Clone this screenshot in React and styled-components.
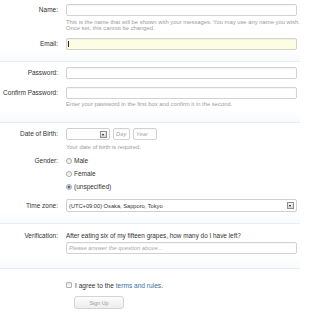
import React from 'react';
import styled, { createGlobalStyle } from 'styled-components';

const GlobalStyle = createGlobalStyle`
  body {
    margin: 0;
    background: #fff;
    font-family: 'Liberation Sans', Arial, sans-serif;
  }
`;

function App() {
  return (
    <>
      <GlobalStyle />
      <StForm>
        <StFieldset $top={4} $bottom={11}>
          <StRow>
            <StLabel>Name:</StLabel>
            <StControl>
              <StInput />
              <StHint $top={4} $lh={5.5}>
                This is the name that will be shown with your messages. You may use any name you wish.
                <br />
                Once set, this cannot be changed.
              </StHint>
            </StControl>
          </StRow>
          <StRow $top={7}>
            <StLabel>Email:</StLabel>
            <StControl>
              <StCaretWrap>
                <StInput $focus />
                <StCaret />
              </StCaretWrap>
            </StControl>
          </StRow>
        </StFieldset>

        <StFieldset $top={5} $bottom={15}>
          <StRow>
            <StLabel>Password:</StLabel>
            <StControl>
              <StInput type="password" />
            </StControl>
          </StRow>
          <StRow $top={8}>
            <StLabel>Confirm Password:</StLabel>
            <StControl>
              <StInput type="password" />
              <StHint $top={2} $lh={6}>
                Enter your password in the first box and confirm it in the second.
              </StHint>
            </StControl>
          </StRow>
        </StFieldset>

        <StFieldset $top={5} $bottom={11}>
          <StRow>
            <StLabel>Date of Birth:</StLabel>
            <StControl>
              <StDateLine>
                <StSelect $width={44}>
                  <span />
                  <StArrow />
                </StSelect>
                <StSmallInput $width={17} placeholder="Day" />
                <StSmallInput $width={24} placeholder="Year" />
              </StDateLine>
              <StHint $top={4} $lh={6}>Your date of birth is required.</StHint>
            </StControl>
          </StRow>
          <StRow $top={4}>
            <StLabel $lh={13}>Gender:</StLabel>
            <StControl>
              {['Male', 'Female', '(unspecified)'].map(option => (
                <StOption key={option}>
                  <StRadio $checked={option === '(unspecified)'} />
                  {option}
                </StOption>
              ))}
            </StControl>
          </StRow>
          <StRow $top={6}>
            <StLabel $lh={13}>Time zone:</StLabel>
            <StControl>
              <StSelect $height={13}>
                <span>(UTC+09:00) Osaka, Sapporo, Tokyo</span>
                <StArrow />
              </StSelect>
            </StControl>
          </StRow>
        </StFieldset>

        <StFieldset $top={8} $bottom={14}>
          <StRow>
            <StLabel $lh={8}>Verification:</StLabel>
            <StControl>
              <StQuestion>After eating six of my fifteen grapes, how many do I have left?</StQuestion>
              <StInput $italic placeholder="Please answer the question above..." />
            </StControl>
          </StRow>
        </StFieldset>

        <StFieldset $top={11} $bottom={8} $last>
          <StRow>
            <StLabel />
            <StControl>
              <StAgree>
                <StCheckbox />
                <span>
                  I agree to the <StLink href="#">terms and rules</StLink>.
                </span>
              </StAgree>
              <StButton type="button">Sign Up</StButton>
            </StControl>
          </StRow>
        </StFieldset>
      </StForm>
    </>
  );
}

export default App;

const StForm = styled.form`
  width: 300px;
`;

const StFieldset = styled.div`
  padding: ${p => p.$top}px 0 ${p => p.$bottom}px;
  border-bottom: ${p => (p.$last ? 'none' : '1px solid #e4eef7')};
  background: ${p =>
    p.$last ? 'transparent' : 'linear-gradient(to bottom, #fff 0, #fff calc(100% - 12px), #f7fafd 100%)'};
`;

const StRow = styled.div`
  display: flex;
  align-items: flex-start;
  margin-top: ${p => p.$top || 0}px;
`;

const StLabel = styled.div`
  width: 58px;
  flex-shrink: 0;
  margin-right: 8px;
  text-align: right;
  font-size: 6.5px;
  line-height: ${p => p.$lh || 12}px;
  color: #333;
  white-space: nowrap;
`;

const StControl = styled.div`
  flex: 1;
  min-width: 0;
  margin-right: 3px;
`;

const StInput = styled.input`
  display: block;
  width: 100%;
  height: 12px;
  box-sizing: border-box;
  margin: 0;
  padding: 0 2px;
  border: 1px solid #d2d2d2;
  border-radius: 2px;
  background: ${p => (p.$focus ? '#fdfde3' : '#fff')};
  box-shadow: inset 0 1px 1px rgba(0, 0, 0, 0.04);
  font-family: inherit;
  font-size: 5.8px;
  font-style: ${p => (p.$italic ? 'italic' : 'normal')};
  outline: none;

  &::placeholder {
    color: #a8a8a8;
  }
`;

const StCaretWrap = styled.div`
  position: relative;
`;

const StCaret = styled.span`
  position: absolute;
  left: 2px;
  top: 3px;
  width: 1px;
  height: 6px;
  background: #222;
`;

const StHint = styled.div`
  margin-top: ${p => p.$top}px;
  font-size: 5.85px;
  line-height: ${p => p.$lh}px;
  color: #9c9c9c;
  white-space: nowrap;
`;

const StDateLine = styled.div`
  display: flex;
  align-items: center;
  gap: 2px;
`;

const StSelect = styled.div`
  display: flex;
  align-items: center;
  justify-content: space-between;
  width: ${p => (p.$width ? `${p.$width}px` : '100%')};
  height: ${p => p.$height || 12}px;
  box-sizing: border-box;
  padding: 0 2px 0 2px;
  border: 1px solid #cfcfcf;
  border-radius: 2px;
  background: #fff;
  font-size: 5.7px;
  color: #333;
  white-space: nowrap;
`;

const StArrow = styled.span`
  position: relative;
  flex-shrink: 0;
  width: 7px;
  height: 7px;
  box-sizing: border-box;
  border: 1px solid #8e8e8e;
  background: linear-gradient(#f4f4f4, #d8d8d8);

  &::after {
    content: '';
    position: absolute;
    left: 1px;
    top: 2px;
    border-left: 1.5px solid transparent;
    border-right: 1.5px solid transparent;
    border-top: 2px solid #111;
  }
`;

const StSmallInput = styled(StInput)`
  width: ${p => p.$width}px;
  font-style: italic;
  margin-left: 1px;
`;

const StOption = styled.label`
  display: flex;
  align-items: center;
  gap: 2px;
  height: 13px;
  font-size: 6.5px;
  color: #333;
`;

const StRadio = styled.span`
  width: 6px;
  height: 6px;
  box-sizing: border-box;
  border-radius: 50%;
  border: 1px solid #a9a9a9;
  background: ${p =>
    p.$checked ? 'radial-gradient(circle, #3a5f8a 0, #4f78a8 1.2px, #e6edf5 1.8px)' : 'linear-gradient(#e9e9e9, #fff)'};
`;

const StQuestion = styled.div`
  font-size: 6.4px;
  line-height: 8px;
  color: #333;
  margin-bottom: 2px;
  white-space: nowrap;
`;

const StAgree = styled.label`
  display: flex;
  align-items: center;
  gap: 3px;
  height: 10px;
  font-size: 6.6px;
  color: #333;
  white-space: nowrap;
`;

const StCheckbox = styled.span`
  width: 6px;
  height: 6px;
  box-sizing: border-box;
  border: 1px solid #b0b0b0;
  border-radius: 1px;
  background: linear-gradient(#e6e6e6, #fff);
`;

const StLink = styled.a`
  color: #3a6fa5;
  text-decoration: none;
`;

const StButton = styled.button`
  display: block;
  width: 50px;
  height: 13px;
  margin: 6px 0 0 8px;
  padding: 0;
  border: 1px solid #d4d4d4;
  border-radius: 3px;
  background: linear-gradient(#fdfdfd, #ececec);
  font-family: inherit;
  font-size: 5.4px;
  color: #999;
`;
